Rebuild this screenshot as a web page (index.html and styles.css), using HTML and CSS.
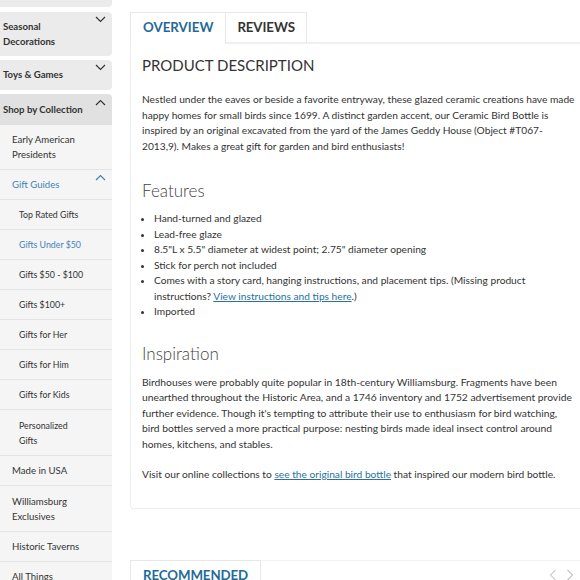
FILE: index.html
```html
<!DOCTYPE html>
<html>
<head>
<meta charset="utf-8">
<link rel="stylesheet" href="styles.css">
</head>
<body>
<div class="page">
  <nav class="sidebar">
    <div class="top-item stub"></div>
    <div class="top-item">
      <span>Seasonal<br>Decorations</span>
      <svg class="chev" width="11" height="7" viewBox="0 0 11 7"><polyline points="1,1 5.5,5.5 10,1" fill="none" stroke="#333" stroke-width="1.2"/></svg>
    </div>
    <div class="top-item toys">
      <span>Toys &amp; Games</span>
      <svg class="chev" width="11" height="7" viewBox="0 0 11 7"><polyline points="1,1 5.5,5.5 10,1" fill="none" stroke="#333" stroke-width="1.2"/></svg>
    </div>
    <div class="top-item open">
      <span>Shop by Collection</span>
      <svg class="chev" width="11" height="7" viewBox="0 0 11 7"><polyline points="1,6 5.5,1.5 10,6" fill="none" stroke="#333" stroke-width="1.2"/></svg>
    </div>
    <div class="sub">
      <div class="l2">Early American<br>Presidents</div>
      <div class="l2 active">
        <span>Gift Guides</span>
        <svg class="chev" width="11" height="7" viewBox="0 0 11 7"><polyline points="1,6 5.5,1.5 10,6" fill="none" stroke="#3f84b5" stroke-width="1.2"/></svg>
      </div>
      <div class="l3">Top Rated Gifts</div>
      <div class="l3 active">Gifts Under $50</div>
      <div class="l3">Gifts $50 - $100</div>
      <div class="l3">Gifts $100+</div>
      <div class="l3">Gifts for Her</div>
      <div class="l3">Gifts for Him</div>
      <div class="l3">Gifts for Kids</div>
      <div class="l3 tall">Personalized<br>Gifts</div>
      <div class="l2">Made in USA</div>
      <div class="l2 tall">Williamsburg<br>Exclusives</div>
      <div class="l2">Historic Taverns</div>
      <div class="l2">All Things</div>
    </div>
  </nav>

  <main class="main">
    <div class="tabs">
      <div class="tab current">OVERVIEW</div>
      <div class="tab">REVIEWS</div>
    </div>
    <section class="panel">
      <h1 class="title">PRODUCT DESCRIPTION</h1>
      <p class="text first">Nestled under the eaves or beside a favorite entryway, these glazed ceramic creations have made happy homes for small birds since 1699. A distinct garden accent, our Ceramic Bird Bottle is inspired by an original excavated from the yard of the James Geddy House (Object #T067-2013,9). Makes a great gift for garden and bird enthusiasts!</p>
      <h2 class="sub-title features">Features</h2>
      <ul class="list">
        <li>Hand-turned and glazed</li>
        <li>Lead-free glaze</li>
        <li>8.5"L x 5.5" diameter at widest point; 2.75" diameter opening</li>
        <li>Stick for perch not included</li>
        <li>Comes with a story card, hanging instructions, and placement tips. (Missing product instructions? <a href="#">View instructions and tips here</a>.)</li>
        <li>Imported</li>
      </ul>
      <h2 class="sub-title inspiration">Inspiration</h2>
      <p class="text after-head insp">Birdhouses were probably quite popular in 18th-century Williamsburg. Fragments have been unearthed throughout the Historic Area, and a 1746 inventory and 1752 advertisement provide further evidence. Though it's tempting to attribute their use to enthusiasm for bird watching, bird bottles served a more practical purpose: nesting birds made ideal insect control around homes, kitchens, and stables.</p>
      <p class="text gap">Visit our online collections to <a href="#">see the original bird bottle</a> that inspired our modern bird bottle.</p>
    </section>

    <div class="rec-bar">
      <div class="tab rec">RECOMMENDED</div>
      <div class="arrows">
        <svg width="8" height="12" viewBox="0 0 8 12"><polyline points="6.5,1 1.5,6 6.5,11" fill="none" stroke="#d0d0d0" stroke-width="1.2"/></svg>
        <svg width="8" height="12" viewBox="0 0 8 12"><polyline points="1.5,1 6.5,6 1.5,11" fill="none" stroke="#c4c4c4" stroke-width="1.2"/></svg>
      </div>
    </div>
  </main>
</div>
</body>
</html>
```

FILE: styles.css
```css
html, body {
  margin: 0;
  padding: 0;
  overflow: hidden;
  background: #fff;
}
body {
  font-family: Lato, "Open Sans", sans-serif;
  color: #333;
  width: 580px;
  height: 580px;
}
.page {
  display: flex;
  align-items: flex-start;
  gap: 18px;
  width: 620px;
}
.sidebar {
  width: 112px;
  flex: none;
  display: flex;
  flex-direction: column;
}
.top-item {
  background: #ebebeb;
  border-radius: 0 4px 4px 0;
  margin-bottom: 4px;
  padding: 7px 6px 7px 3px;
  font-size: 9.6px;
  font-weight: 700;
  line-height: 15px;
  display: flex;
  justify-content: space-between;
  align-items: flex-start;
}
.top-item.stub {
  height: 7px;
  padding: 0;
  margin-bottom: 5px;
  border-radius: 0 0 4px 0;
}
.top-item.toys {
  padding-bottom: 8px;
}
.top-item.open {
  background: #e1e1e1;
  margin-bottom: 0;
  border-radius: 0 4px 0 0;
  padding-top: 8px;
  padding-bottom: 8px;
}
.chev {
  flex: none;
  margin-top: -3px;
}
.sub {
  background: #f5f5f5;
  display: flex;
  flex-direction: column;
}
.l2, .l3 {
  border-bottom: 1px solid #e4e4e4;
  padding: 7px 6px 7px 12px;
  line-height: 15px;
  font-size: 9.6px;
  color: #333;
  display: flex;
  justify-content: space-between;
  align-items: flex-start;
}
.l2.tall, .l3.tall {
  padding-top: 8px;
}
.l3 {
  padding-left: 19px;
  font-size: 8.8px;
}
.l2.active, .l3.active {
  color: #3f84b5;
}
.main {
  width: 470px;
  flex: none;
  padding-top: 12px;
}
.tabs {
  display: flex;
  border-bottom: 2px solid #f0f0f0;
}
.tab {
  border: 1px solid #e8e8e8;
  border-bottom: none;
  padding: 0 12px;
  height: 30px;
  line-height: 28px;
  font-size: 13.3px;
  font-weight: 700;
  color: #333;
  background: #fff;
  box-sizing: border-box;
}
.tab + .tab {
  border-left: none;
  padding: 0 11px;
  letter-spacing: -0.1px;
}
.tab.current {
  color: #1f6a99;
  height: 32px;
  margin-bottom: -2px;
}
.panel {
  border-left: 1px solid #ececec;
  border-bottom: 1px solid #ececec;
  border-radius: 0 0 0 4px;
  padding: 12px 0 25px 11px;
}
.title {
  margin: 0;
  font-size: 15px;
  font-weight: 400;
  line-height: 18px;
  color: #333;
}
.text {
  margin: 0;
  width: 433px;
  font-size: 10.2px;
  line-height: 15.5px;
  color: #333;
}
.text.first {
  margin-top: 18px;
}
.text.after-head {
  margin-top: 10px;
}
.text.insp {
  font-size: 10.3px;
}
.text.gap {
  margin-top: 15px;
}
.sub-title {
  margin: 0;
  font-size: 17px;
  font-weight: 300;
  line-height: 22px;
  color: #444;
}
.sub-title.features {
  margin-top: 26px;
}
.sub-title.inspiration {
  margin-top: 23px;
}
.list {
  margin: 9px 0 0;
  padding-left: 12px;
  width: 421px;
  font-size: 10.2px;
  line-height: 15.5px;
}
a {
  color: #2a71a0;
  text-decoration: underline;
}
.rec-bar {
  margin-top: 51px;
  display: flex;
  align-items: flex-start;
  border-top: 1px solid #f2f2f2;
  width: 450px;
}
.tab.rec {
  color: #1f6a99;
  margin-top: -1px;
  height: 30px;
  letter-spacing: -0.1px;
}
.arrows {
  margin-left: auto;
  display: flex;
  gap: 9px;
  padding-top: 8px;
  padding-right: 6px;
}
```
